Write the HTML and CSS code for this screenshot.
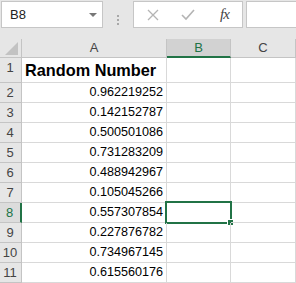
FILE: index.html
```html
<!DOCTYPE html>
<html lang="en">
<head>
    <meta charset="UTF-8">
    <title>Random Number</title>
    <link rel="stylesheet" href="styles.css">
</head>
<body>
    <div class="bar">
        <div class="namebox">
            <span>B8</span>
            <span class="caret"></span>
        </div>
        <div class="grip"><i></i><i></i><i></i></div>
        <div class="fxbox">
            <svg class="ico" width="12" height="12" viewBox="0 0 12 12"><path d="M1 1L11 11M11 1L1 11" stroke="#b4b4b4" stroke-width="1.3" fill="none"/></svg>
            <svg class="ico" width="14" height="12" viewBox="0 0 14 12"><path d="M1 6L5 10L13 1" stroke="#b4b4b4" stroke-width="1.6" fill="none"/></svg>
            <span class="fx">fx</span>
        </div>
        <div class="formula"></div>
    </div>

    <div class="sheet" id="sheet">
        <div class="hd corner"><svg width="22" height="18" viewBox="0 0 22 18"><polygon points="18,3 18,16 5,16" fill="#c2c2c2"/></svg></div>
        <div class="hd col">A</div>
        <div class="hd col sel">B</div>
        <div class="hd col">C</div>
    </div>

    <script>
        const values = ['0.962219252', '0.142152787', '0.500501086', '0.731283209', '0.488942967',
            '0.105045266', '0.557307854', '0.227876782', '0.734967145', '0.615560176'];
        const sheet = document.getElementById('sheet');

        function addCell(cls, text) {
            const div = document.createElement('div');
            div.className = cls;
            div.textContent = text || '';
            sheet.appendChild(div);
            return div;
        }

        addCell('hd row', '1');
        addCell('cell title', 'Random Number');
        addCell('cell');
        addCell('cell');

        values.forEach((v, i) => {
            const n = i + 2;
            addCell(n === 8 ? 'hd row sel' : 'hd row', String(n));
            addCell('cell num', v);
            const b = addCell('cell');
            addCell('cell');
            if (n === 8) {
                const box = document.createElement('div');
                box.className = 'active';
                box.innerHTML = '<span class="handle"></span>';
                b.appendChild(box);
            }
        });
    </script>
</body>
</html>
```

FILE: styles.css
```css
body {
    margin: 0;
    background: #e6e6e6;
    font-family: "Liberation Sans", Arial, sans-serif;
    overflow: hidden;
}
.bar {
    display: flex;
    height: 39px;
    padding: 1px 0 0 1px;
    box-sizing: border-box;
}
.namebox,
.fxbox,
.formula {
    height: 27px;
    box-sizing: border-box;
    background: #fff;
    border: 1px solid #c6c6c6;
}
.namebox {
    width: 102px;
    display: flex;
    align-items: center;
    justify-content: space-between;
    padding: 0 5px 0 8px;
    font-size: 13px;
    color: #222;
}
.caret {
    width: 0;
    height: 0;
    border-left: 4px solid transparent;
    border-right: 4px solid transparent;
    border-top: 4px solid #777;
    margin-top: 1px;
}
.grip {
    width: 30px;
    display: flex;
    flex-direction: column;
    align-items: center;
    justify-content: center;
    gap: 2px;
}
.grip i {
    width: 2px;
    height: 2px;
    background: #a8a8a8;
}
.fxbox {
    width: 110px;
    display: flex;
    align-items: center;
    padding-left: 13px;
}
.ico {
    display: block;
}
.ico + .ico {
    margin-left: 22px;
}
.fx {
    margin-left: 25px;
    font-family: "Liberation Serif", serif;
    font-style: italic;
    font-size: 15px;
    color: #444;
    letter-spacing: -1px;
}
.formula {
    flex: 1;
    margin-left: 3px;
    border-right: none;
}

.sheet {
    display: grid;
    grid-template-columns: 22px 145px 64px 65px;
    grid-template-rows: 19px 25px repeat(10, 20px);
    background: #fff;
}
.sheet > div {
    box-sizing: border-box;
    border-right: 1px solid #d9d9d9;
    border-bottom: 1px solid #d9d9d9;
}
.sheet > .hd {
    background: #e6e6e6;
    border-color: #c4c4c4;
    color: #444;
    font-size: 13px;
}
.corner svg {
    display: block;
}
.col {
    text-align: center;
    line-height: 18px;
}
.col.sel {
    background: #d2d2d2;
    color: #217346;
    border-bottom: 2px solid #217346;
}
.row {
    text-align: center;
    line-height: 19px;
    padding-right: 1px;
}
.sheet > .row.sel {
    background: #dcdcdc;
    color: #217346;
    border-right: 2px solid #217346;
}
.cell {
    position: relative;
    font-size: 12.6px;
    line-height: 19px;
    color: #000;
}
.num {
    text-align: right;
    padding-right: 3px;
}
.title {
    font-size: 16.3px;
    font-weight: bold;
    line-height: 24px;
    padding-left: 3px;
    white-space: nowrap;
}
.active {
    position: absolute;
    top: -2px;
    left: -2px;
    right: -2px;
    bottom: -2px;
    border: 2px solid #217346;
}
.handle {
    position: absolute;
    right: -4px;
    bottom: -4px;
    width: 5px;
    height: 5px;
    background: #217346;
    border: 1px solid #fff;
}
```
